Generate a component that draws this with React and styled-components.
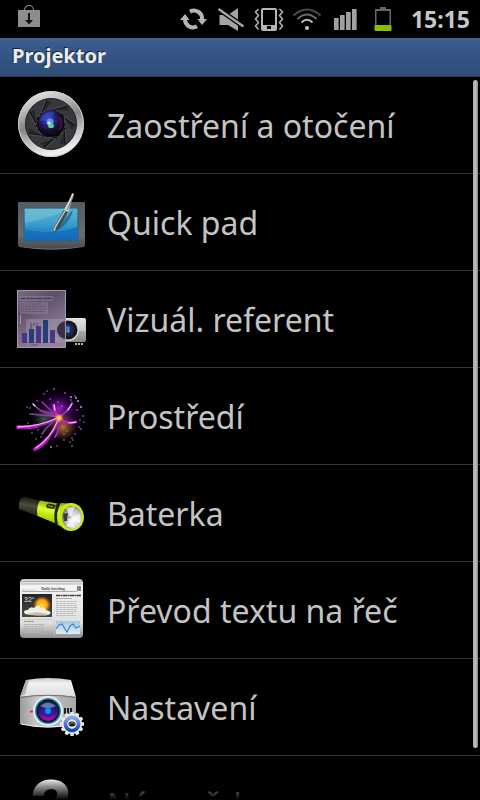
import styled, { createGlobalStyle } from "styled-components";

const GlobalStyle = createGlobalStyle`
  * {
    box-sizing: border-box;
    margin: 0;
    padding: 0;
  }

  body {
    background: #000;
    font-family: "Noto Sans", "Open Sans", sans-serif;
  }
`;

const Screen = styled.div`
  display: flex;
  flex-direction: column;
  height: 100vh;
  overflow: hidden;
  color: #c3c3c3;
`;

const StatusBar = styled.header`
  display: flex;
  align-items: center;
  justify-content: space-between;
  flex: none;
  height: 38px;
  padding: 0 10px 0 18px;
`;

const StatusIcons = styled.div`
  display: flex;
  align-items: center;
  gap: 8px;
`;

const StatusIcon = styled.svg`
  display: block;
  width: ${(props) => props.$width || 30}px;
  height: ${(props) => props.$height || 24}px;
`;

const Clock = styled.time`
  padding-left: 5px;
  font-size: 23px;
  font-weight: 700;
  line-height: 38px;
  color: #c6c6c6;
`;

const TitleBar = styled.div`
  flex: none;
  padding: 0 12px 2px;
  background: linear-gradient(#42638f, #38598a 20%, #2d4c79);
  border-bottom: 1px solid #3a3a3a;
`;

const Title = styled.h1`
  font-size: 20px;
  font-weight: 700;
  line-height: 36px;
  color: #ececec;
  text-shadow: -1px -1px 0 #14233c;
`;

const Main = styled.main`
  position: relative;
  flex: 1;
  min-height: 0;
  overflow: hidden;
`;

const List = styled.ul`
  list-style: none;
`;

const Item = styled.li`
  border-bottom: 1px solid #363636;
`;

const ItemButton = styled.button`
  display: flex;
  align-items: center;
  gap: 20px;
  width: 100%;
  height: 96px;
  padding: 0 15px;
  border: none;
  background: none;
  color: inherit;
  font-family: inherit;
  font-size: 32px;
  line-height: 48px;
  text-align: left;
  white-space: nowrap;
  cursor: pointer;
`;

const ItemLabel = styled.span`
  padding-top: 2px;
`;

const ItemIcon = styled.svg`
  display: block;
  flex: none;
  width: 72px;
  height: 72px;
`;

const Fade = styled.div`
  position: absolute;
  right: 0;
  bottom: 0;
  left: 0;
  height: 22px;
  background: linear-gradient(transparent, #000);
  pointer-events: none;
`;

const ScrollThumb = styled.div`
  position: absolute;
  top: 3px;
  right: 2px;
  width: 5px;
  height: 92.4%;
  border-radius: 3px;
  background: linear-gradient(90deg, #aaa5a5, #c4bfbf 50%, #858181);
`;

function Dots({ points, fill = "#b09fce" }) {
  return points.map(([x, y, r]) => <circle key={`${x}-${y}`} cx={x} cy={y} r={r || 0.7} fill={fill} />);
}

function FocusIcon() {
  const blades = [0, 51, 103, 154, 206, 257, 309];
  return (
    <ItemIcon viewBox="0 0 72 72" aria-hidden="true">
      <defs>
        <linearGradient id="ring" x1="0" y1="0" x2="0.3" y2="1">
          <stop offset="0" stopColor="#f4f4f4" />
          <stop offset="0.3" stopColor="#bcbcbc" />
          <stop offset="0.55" stopColor="#858585" />
          <stop offset="0.8" stopColor="#c4c4c4" />
          <stop offset="1" stopColor="#eee" />
        </linearGradient>
        <radialGradient id="glass" cx="0.4" cy="0.35" r="0.65">
          <stop offset="0" stopColor="#4358c8" />
          <stop offset="0.4" stopColor="#26247c" />
          <stop offset="0.7" stopColor="#1d0d2c" />
          <stop offset="1" stopColor="#08080d" />
        </radialGradient>
      </defs>
      <circle cx="36" cy="35" r="33" fill="url(#ring)" />
      <circle cx="36" cy="35" r="32.5" fill="none" stroke="#cfcfcf" />
      <circle cx="36" cy="35" r="25.5" fill="#36383c" stroke="#1d1d20" />
      {blades.map((angle) => (
        <g key={angle} transform={`rotate(${angle + 10} 36 35)`}>
          <path d="M36 21 L60 32 L58 37 L47 26Z" fill="#26272b" />
          <path d="M34 20 L60 32" fill="none" stroke="#0b0c0e" strokeWidth="1.2" />
          <path d="M36 20 L60 31" fill="none" stroke="#5d6066" strokeWidth="0.6" />
        </g>
      ))}
      <path d="M36 21 L47 25 L50 36 L44 47 L32 48 L23 41 L22 29Z" fill="#08080c" />
      <circle cx="36" cy="34" r="13" fill="url(#glass)" />
      <path d="M25 32 A12 12 0 0 1 40 23 L35 31Z" fill="#344fc4" opacity="0.6" />
      <path d="M44 28 a10 10 0 0 1 0 13" fill="none" stroke="#36193f" strokeWidth="2" />
      <circle cx="35" cy="33" r="3.5" fill="#649ad6" />
      <ellipse cx="36" cy="37" rx="3" ry="2" fill="#56d59b" />
      <circle cx="34" cy="34" r="1.6" fill="#e9d6ff" />
    </ItemIcon>
  );
}

function QuickPadIcon() {
  return (
    <ItemIcon viewBox="0 0 72 72" aria-hidden="true">
      <defs>
        <linearGradient id="padFrame" x1="0" y1="0" x2="0" y2="1">
          <stop offset="0" stopColor="#555b60" />
          <stop offset="0.7" stopColor="#686d71" />
          <stop offset="1" stopColor="#44484c" />
        </linearGradient>
        <linearGradient id="padScreen" x1="0" y1="0" x2="0" y2="1">
          <stop offset="0" stopColor="#56aec9" />
          <stop offset="0.45" stopColor="#2c93c6" />
          <stop offset="0.65" stopColor="#1578bf" />
          <stop offset="1" stopColor="#1466b8" />
        </linearGradient>
      </defs>
      <path d="M3 17 Q3 16 4 16 H69 Q70 16 70 17 V60 Q36 67 3 60Z" fill="url(#padFrame)" />
      <path d="M4 60.5 Q36 66 69 60.5" fill="none" stroke="#74797c" strokeWidth="0.8" />
      <rect x="9" y="22" width="54" height="33" fill="url(#padScreen)" stroke="#2c6384" />
      <path d="M10 23 H51 Q40 31 10 37Z" fill="#8acbd8" opacity="0.4" />
      <path d="M10 43 Q35 50 62 41 V23 H10Z" fill="#7fd0e2" opacity="0.22" />
      <path d="M38 47 L58 23 Q57 34 46 42Z" fill="#0e4e80" opacity="0.55" />
      <path d="M37.5 47.5 L40 40 L49 24 L53 26 L44 42Z" fill="#46494b" />
      <path d="M39 45 L41 40 L50 25" fill="none" stroke="#d4d4d4" strokeWidth="1.3" />
      <path d="M49 24 L56 10 L57 7 L59 8 L58 11 L53 26Z" fill="#d9d5cd" />
      <path d="M52 24 L58 11" stroke="#736f68" strokeWidth="1" />
    </ItemIcon>
  );
}

function PresenterIcon() {
  return (
    <ItemIcon viewBox="0 0 72 72" aria-hidden="true">
      <defs>
        <linearGradient id="beamer" x1="0" y1="0" x2="0" y2="1">
          <stop offset="0" stopColor="#ededed" />
          <stop offset="0.5" stopColor="#adadad" />
          <stop offset="1" stopColor="#868686" />
        </linearGradient>
        <linearGradient id="sheet" x1="0" y1="0" x2="0.5" y2="1">
          <stop offset="0" stopColor="#7d6c85" />
          <stop offset="0.35" stopColor="#5f4e68" />
          <stop offset="0.6" stopColor="#75657f" />
          <stop offset="1" stopColor="#94839c" />
        </linearGradient>
      </defs>
      <rect x="30" y="35" width="41" height="24" rx="2" fill="url(#beamer)" />
      <path d="M51 35 H69 L71 48 H51Z" fill="#ddd" opacity="0.6" />
      <path d="M60 61 h8" stroke="#bbb" strokeWidth="2" strokeDasharray="2 1" />
      <circle cx="53" cy="47" r="11" fill="#d5d5d5" />
      <circle cx="53" cy="47" r="9.5" fill="#18181b" />
      <circle cx="53" cy="47" r="6" fill="#252068" />
      <rect x="2" y="7" width="49" height="58" fill="url(#sheet)" />
      <path d="M51 36 H13 Q11 36 11 38 V59 H51Z" fill="#b9a8c2" opacity="0.35" />
      <path d="M51 36 A11 11 0 0 0 51 58Z" fill="#95859f" />
      <path d="M51 38 A9 9 0 0 0 51 56Z" fill="#3b2e45" />
      <circle cx="53" cy="45" r="2" fill="#3c79d1" />
      <circle cx="53" cy="48" r="1.8" fill="#41b36d" />
      <rect x="2.5" y="7.5" width="48" height="57" fill="none" stroke="#a594ad" />
      <rect x="5" y="13" width="33" height="5" fill="#9787a0" opacity="0.5" />
      <path d="M6 15.5 H37" stroke="#43374d" strokeWidth="1.6" strokeDasharray="4 0.5 1 0.5 2 0.5" />
      <rect x="5" y="19" width="28" height="12" fill="#9787a0" opacity="0.45" />
      <path d="M6 21 H26 M6 23.5 H31 M6 26 H32 M6 28.5 H30" stroke="#655770" strokeDasharray="3 0.6" />
      <path d="M16 40 V46 M19 40 V43 M22 40 V43" stroke="#665872" strokeWidth="1.5" />
      <path d="M5.5 32 V41" stroke="#a08faa" />
      <path d="M7 50 h5 V60 h-5Z M21 43 h5 V60 h-5Z M35 47 h5 V60 h-5Z" fill="#43378b" />
      <path d="M14 46 h5 V60 h-5Z M28 37 h5 V60 h-5Z" fill="#263d76" />
      <path d="M16 62 h7" stroke="#62546c" />
    </ItemIcon>
  );
}

function AmbienceIcon() {
  const sparks = [
    [39, 9, 0.8], [32, 11], [29, 14], [50, 13, 0.8], [56, 17, 1], [60, 16], [61, 18, 1], [63, 21, 1], [56, 20],
    [66, 27, 1], [62, 30], [68, 36, 0.8], [65, 40], [69, 42], [66, 49, 0.8], [64, 47], [57, 58], [55, 62],
    [58, 60], [57, 66, 0.8], [49, 60], [42, 66], [36, 67, 0.9], [27, 63], [21, 59], [17, 53], [13, 43],
    [15, 28], [12, 27], [22, 21], [35, 19], [43, 22], [47, 26], [52, 51], [49, 54], [26, 57], [23, 50], [60, 54],
  ];
  return (
    <ItemIcon viewBox="0 0 72 72" aria-hidden="true">
      <defs>
        <radialGradient id="aura">
          <stop offset="0" stopColor="#a020c0" stopOpacity="0.95" />
          <stop offset="0.45" stopColor="#5c0b88" stopOpacity="0.65" />
          <stop offset="1" stopColor="#20003c" stopOpacity="0" />
        </radialGradient>
        <radialGradient id="amber">
          <stop offset="0" stopColor="#d99524" stopOpacity="0.8" />
          <stop offset="1" stopColor="#69500c" stopOpacity="0" />
        </radialGradient>
        <radialGradient id="moss">
          <stop offset="0" stopColor="#46634a" stopOpacity="0.8" />
          <stop offset="1" stopColor="#203a20" stopOpacity="0" />
        </radialGradient>
        <radialGradient id="core">
          <stop offset="0" stopColor="#fff2a2" />
          <stop offset="0.4" stopColor="#ffb02e" />
          <stop offset="1" stopColor="#ee6a3a" stopOpacity="0" />
        </radialGradient>
      </defs>
      <circle cx="43" cy="35" r="31" fill="url(#aura)" opacity="0.65" />
      <circle cx="44" cy="29" r="15" fill="url(#aura)" />
      <circle cx="48" cy="47" r="14" fill="url(#amber)" />
      <circle cx="29" cy="39" r="12" fill="url(#moss)" />
      <Dots points={sparks} />
      <g fill="none" strokeLinecap="round">
        <g stroke="#8c4298" strokeWidth="1.5">
          <path d="M43 37 Q29 35 15 34" />
          <path d="M43 37 Q27 34 18 24" />
          <path d="M43 37 Q34 29 27 22" />
          <path d="M43 38 Q32 46 27 54" />
          <path d="M43 37 Q34 31 26 31" />
        </g>
        <path d="M44 38 Q26 47 12 47" stroke="#8f2d96" strokeWidth="2.5" />
        <path d="M22 46 Q12 48 3 47" stroke="#b314c4" strokeWidth="4" />
        <path d="M43 39 Q39 54 28 63" stroke="#8f2d96" strokeWidth="2.5" />
        <path d="M33 58 Q28 65 20 69" stroke="#b314c4" strokeWidth="4" />
        <path d="M43 37 Q38 29 39 25" stroke="#b021cf" strokeWidth="3" />
        <path d="M44 38 Q52 45 61 42" stroke="#b021cf" strokeWidth="2.5" />
        <path d="M44 37 Q52 33 57 23" stroke="#94319f" strokeWidth="2" />
        <path d="M44 39 Q45 51 40 57" stroke="#a426b8" strokeWidth="2" />
        <path d="M42 38 Q26 46 3 47" stroke="#f7b5ef" strokeWidth="1.3" />
        <path d="M43 40 Q36 58 21 68" stroke="#f3a8eb" strokeWidth="1.3" />
        <path d="M40 30 L39 25 M54 43 L61 42 M53 30 L57 24 M20 26 L18 24" stroke="#ffc9ff" strokeWidth="1.2" />
      </g>
      <circle cx="44" cy="38" r="5" fill="url(#core)" />
    </ItemIcon>
  );
}

function TorchIcon() {
  return (
    <ItemIcon viewBox="0 0 72 72" aria-hidden="true">
      <defs>
        <linearGradient id="grip" x1="0.3" y1="0" x2="0.1" y2="1">
          <stop offset="0" stopColor="#15180c" />
          <stop offset="0.4" stopColor="#4a4d3c" />
          <stop offset="1" stopColor="#15180c" />
        </linearGradient>
        <linearGradient id="lime" x1="0.3" y1="0" x2="0.1" y2="1">
          <stop offset="0" stopColor="#8dac00" />
          <stop offset="0.35" stopColor="#dcff2c" />
          <stop offset="0.75" stopColor="#a8cf00" />
          <stop offset="1" stopColor="#5e7800" />
        </linearGradient>
        <radialGradient id="bulb" cx="0.6" cy="0.6" r="0.7">
          <stop offset="0" stopColor="#fff" />
          <stop offset="0.55" stopColor="#c8c8c8" />
          <stop offset="1" stopColor="#54564a" />
        </radialGradient>
      </defs>
      <path d="M9 19.5 Q3 22 4 32 L22 39 L25 23.5Z" fill="url(#grip)" />
      <path d="M25 23.5 Q21 29 22.5 39 L42 47 L46 27Z" fill="url(#lime)" />
      <path d="M31 28 L34 26.5 L41 28 L39 32 L32 31Z" fill="#282e10" />
      <path d="M33 28.5 L38 30" stroke="#a0b443" />
      <path d="M42 26 L47 26 L45 50 L40 47 Q38 35 42 26Z" fill="#1d220b" />
      <path d="M46 26 Q40 36 43 48 L56 54 L61 27Z" fill="url(#lime)" />
      <ellipse cx="56" cy="40" rx="13" ry="14" fill="#c4ed12" />
      <ellipse cx="57" cy="40.5" rx="10" ry="11.5" fill="url(#bulb)" />
      <path d="M56 40 L51 31 L60 29Z M56 41 L65 37 V46Z M56 42 L60 51 L51 49Z" fill="#fff" opacity="0.6" />
      <path d="M48 37 L53 36 L52 44 L49 44Z" fill="#373a35" />
      <path d="M52 39 L57 40 L52 42Z" fill="#999" />
    </ItemIcon>
  );
}

function BriefingIcon() {
  return (
    <ItemIcon viewBox="0 0 72 72" aria-hidden="true">
      <defs>
        <linearGradient id="paper" x1="0" y1="0" x2="0" y2="1">
          <stop offset="0" stopColor="#c4c4c4" />
          <stop offset="0.1" stopColor="#f5f5f5" />
          <stop offset="0.75" stopColor="#dedede" />
          <stop offset="1" stopColor="#8f8f8f" />
        </linearGradient>
        <linearGradient id="night" x1="0" y1="0" x2="0" y2="1">
          <stop offset="0" stopColor="#252525" />
          <stop offset="1" stopColor="#474747" />
        </linearGradient>
        <radialGradient id="sun">
          <stop offset="0" stopColor="#ffe55f" />
          <stop offset="0.6" stopColor="#ff9e00" />
          <stop offset="1" stopColor="#d86700" stopOpacity="0" />
        </radialGradient>
        <linearGradient id="sky" x1="0" y1="0" x2="0" y2="1">
          <stop offset="0" stopColor="#a0c9df" />
          <stop offset="1" stopColor="#e2eaee" />
        </linearGradient>
      </defs>
      <rect x="5" y="5" width="63" height="59" rx="4" fill="url(#paper)" />
      <path d="M6 7.5 H67 M5 10 H68" stroke="#a5a5a5" strokeWidth="0.8" />
      <text x="38" y="16" textAnchor="middle" fontFamily="Liberation Serif, serif" fontSize="4" fontWeight="700" fill="#4a4a4a">
        Daily briefing
      </text>
      <rect x="62" y="12" width="4" height="5" fill="#8b8580" />
      <path d="M7 17.5 H62" stroke="#999" strokeWidth="0.8" />
      <path d="M7 16 H20" stroke="#bbb" strokeDasharray="2 1" strokeWidth="0.8" />
      <rect x="7" y="20" width="30" height="23" fill="url(#night)" />
      <circle cx="27" cy="31" r="9" fill="url(#sun)" />
      <path d="M10 40 Q7 36 13 36 Q15 32 19 34 Q23 29 26 34 Q30 32 31 36 Q37 37 35 40 Q30 43 10 40Z" fill="#f1eee4" />
      <path d="M12 40 Q20 37 33 40 Q30 42 12 40Z" fill="#c9b99d" />
      <text x="9" y="28" fontFamily="Roboto, sans-serif" fontSize="7" fill="#e5e5e5">
        32°
      </text>
      <path d="M41 21.5 H66" stroke="#3c3c3c" strokeWidth="1.4" strokeDasharray="4 0.5 2 0.5" />
      <path d="M41 24.5 H57" stroke="#8a8a8a" strokeWidth="0.8" strokeDasharray="2 0.5" />
      <path
        d="M41 27.5 H62 M41 29.5 H61 M41 31.5 H62 M41 33.5 H62 M41 35.5 H61 M41 37.5 H62 M41 39.5 H59 M41 41.5 H61"
        stroke="#bdbdbd"
        strokeDasharray="3 0.6"
      />
      <path d="M9 47.5 H19" stroke="#888" strokeDasharray="2 0.5" />
      <path d="M9 50.5 H29 M9 52.5 H28 M9 54.5 H29 M9 56.5 H29 M9 58.5 H27" stroke="#b2b2b2" strokeDasharray="3 0.6" />
      <path d="M7 45.5 H38 M39.5 46 V62" stroke="#c8c8c8" strokeWidth="0.7" />
      <rect x="41" y="47" width="24" height="13" fill="url(#sky)" />
      <path d="M41 55 L44 51 L47 50 L50 55 L52 58 L55 52 L58 50 L61 54 L65 52" fill="none" stroke="#3b83cc" strokeWidth="1.2" />
    </ItemIcon>
  );
}

function SettingsIcon() {
  const teeth = Array.from({ length: 12 }, (_, i) => i * 30);
  return (
    <ItemIcon viewBox="0 4 72 72" aria-hidden="true">
      <defs>
        <linearGradient id="lid" x1="0" y1="0" x2="0" y2="1">
          <stop offset="0" stopColor="#c8c8c8" />
          <stop offset="0.3" stopColor="#f1f1f1" />
          <stop offset="1" stopColor="#dcdcdc" />
        </linearGradient>
        <linearGradient id="case" x1="0" y1="0" x2="1" y2="0">
          <stop offset="0" stopColor="#9b9b9b" />
          <stop offset="0.3" stopColor="#c8c8c8" />
          <stop offset="1" stopColor="#a8a8a8" />
        </linearGradient>
        <linearGradient id="violet" x1="0" y1="0" x2="0" y2="1">
          <stop offset="0" stopColor="#122042" />
          <stop offset="0.5" stopColor="#35117c" />
          <stop offset="1" stopColor="#c500b7" />
        </linearGradient>
        <linearGradient id="cog" x1="0" y1="0" x2="0" y2="1">
          <stop offset="0" stopColor="#87a8e7" />
          <stop offset="1" stopColor="#1747b0" />
        </linearGradient>
      </defs>
      <path d="M5 30 Q33 25 61 30 V57 Q33 64 5 57Z" fill="url(#case)" />
      <path d="M11 13 Q33 9 56 13 L61 30 Q33 26 5 30Z" fill="url(#lid)" />
      <path d="M14 13 L10 27 L5 30 L11 13Z" fill="#b0b0b0" />
      <path d="M5 30.5 Q33 26 61 30.5" fill="none" stroke="#707070" />
      <path d="M6 57 Q33 63 60 57" fill="none" stroke="#eee" />
      <path d="M15 44.5 H19" stroke="#d324af" strokeWidth="2" />
      <path d="M50 41 V47 M53 41 V47 M56 41 V47" stroke="#222" strokeWidth="2" />
      <circle cx="33" cy="44" r="15" fill="#ececec" />
      <circle cx="33" cy="44" r="13" fill="#128fb7" />
      <circle cx="33" cy="44" r="11.5" fill="#101324" />
      <circle cx="33" cy="44" r="10" fill="url(#violet)" />
      <circle cx="33" cy="44" r="6" fill="#1929a6" />
      <circle cx="33" cy="44" r="3" fill="#178ae5" />
      <path d="M25 39 Q33 32 41 39 Q33 43 25 39Z" fill="#b4cfe1" opacity="0.5" />
      {teeth.map((angle) => (
        <path key={angle} d="M54.5 49 L55.5 45 H58.5 L59.5 49Z" fill="#e6e6e6" transform={`rotate(${angle} 57 57)`} />
      ))}
      <circle cx="57" cy="57" r="10" fill="#ededed" />
      <circle cx="57" cy="57" r="6.5" fill="none" stroke="url(#cog)" strokeWidth="4" />
      <circle cx="57" cy="57" r="4.5" fill="#e5e5e5" />
      <ellipse cx="57" cy="57" rx="3.5" ry="2.5" fill="#171717" />
      <path d="M54 58 Q57 54 60 57" fill="none" stroke="#999" />
    </ItemIcon>
  );
}

function HelpIcon() {
  return (
    <ItemIcon viewBox="0 0 72 72" aria-hidden="true">
      <defs>
        <linearGradient id="help" gradientUnits="userSpaceOnUse" x1="0" y1="10" x2="0" y2="60">
          <stop offset="0" stopColor="#fff" />
          <stop offset="1" stopColor="#8b8b8b" />
        </linearGradient>
      </defs>
      <text
        x="36"
        y="59"
        textAnchor="middle"
        fontFamily="Liberation Sans, sans-serif"
        fontSize="66"
        fontWeight="700"
        fill="url(#help)"
        stroke="url(#help)"
        strokeWidth="2"
      >
        ?
      </text>
    </ItemIcon>
  );
}

function DownloadIcon() {
  return (
    <StatusIcon $width={22} $height={28} viewBox="0 0 22 28" aria-hidden="true">
      <path d="M6.5 6 V5 a4.5 4.5 0 0 1 9 0 V6" fill="none" stroke="#888" strokeWidth="1.2" />
      <rect y="5" width="22" height="17" fill="#8d8d8d" />
      <path d="M10 8 h2 V15 h3 L11 19.5 L7 15 h3Z" fill="#111" />
    </StatusIcon>
  );
}

function SyncIcon() {
  return (
    <StatusIcon viewBox="0 0 30 24" aria-hidden="true">
      <g fill="none" stroke="#b5b5b5" strokeWidth="4">
        <path d="M12 4.7 A8 8 0 0 1 24 12" />
        <path d="M7 12 A8 8 0 0 0 19 19.3" />
      </g>
      <path d="M2 13 H11.5 L7 7Z M19.5 12 H29 L24 18Z" fill="#b5b5b5" />
    </StatusIcon>
  );
}

function MuteIcon() {
  return (
    <StatusIcon viewBox="0 0 30 24" aria-hidden="true">
      <path d="M3.5 8 H12 L22 1 V24 L12 18 H3.5Z" fill="#a5a5a5" />
      <path d="M2.5 2 L27.5 19.5" stroke="#000" strokeWidth="5" />
      <path d="M2.5 2 L27.5 19.5" stroke="#a5a5a5" strokeWidth="2.4" />
    </StatusIcon>
  );
}

function VibrateIcon() {
  return (
    <StatusIcon viewBox="0 0 30 24" aria-hidden="true">
      <rect x="8" y="2" width="14" height="21" rx="1" fill="none" stroke="#b5b5b5" strokeWidth="2" />
      <path d="M8 18 H22 V23 H8Z" fill="#b5b5b5" />
      <rect x="13" y="19" width="4" height="3" fill="#000" />
      <g fill="none" stroke="#b5b5b5" strokeWidth="1.5">
        <path d="M4.5 2 L1.5 5 L4.5 8.5 L1.5 12 L4.5 15.5 L1.5 19 L4.5 22.5" />
        <path d="M25.5 2 L28.5 5 L25.5 8.5 L28.5 12 L25.5 15.5 L28.5 19 L25.5 22.5" />
      </g>
    </StatusIcon>
  );
}

function WifiIcon() {
  return (
    <StatusIcon viewBox="0 0 30 24" aria-hidden="true">
      <g fill="none" strokeWidth="2">
        <path d="M1.5 8.5 Q15 -3.5 28.5 8.5" stroke="#4c4c4c" />
        <path d="M5.5 12 Q15 3 24.5 12" stroke="#6e6e6e" />
        <path d="M9.5 15.5 Q15 10 20.5 15.5" stroke="#bbb" />
      </g>
      <circle cx="15" cy="21" r="2" fill="#c4c4c4" />
    </StatusIcon>
  );
}

function SignalIcon() {
  return (
    <StatusIcon viewBox="0 0 30 24" aria-hidden="true">
      <path d="M4 11 h5 V23 h-5Z M10 8 h5 V23 h-5Z M16 5 h5 V23 h-5Z M22 2 h5 V23 h-5Z" fill="#a0a0a0" />
      <path d="M8.5 11 V23 M14.5 8 V23 M20.5 5 V23 M26.5 2 V23" stroke="#6a6a6a" />
    </StatusIcon>
  );
}

function BatteryIcon() {
  return (
    <StatusIcon viewBox="0 0 30 24" aria-hidden="true">
      <path d="M12 0 h6 V2 h5 V23 H7 V2 h5Z" fill="#686868" />
      <path d="M8.5 4 H21.5 V18 H8.5Z" fill="#000" />
      <rect x="6.5" y="18" width="17" height="6" rx="1" fill="#8ebd00" />
    </StatusIcon>
  );
}

const items = [
  { label: "Zaostření a otočení", Icon: FocusIcon },
  { label: "Quick pad", Icon: QuickPadIcon },
  { label: "Vizuál. referent", Icon: PresenterIcon },
  { label: "Prostředí", Icon: AmbienceIcon },
  { label: "Baterka", Icon: TorchIcon },
  { label: "Převod textu na řeč", Icon: BriefingIcon },
  { label: "Nastavení", Icon: SettingsIcon },
  { label: "Nápověda", Icon: HelpIcon },
];

function App() {
  return (
    <>
      <GlobalStyle />
      <Screen>
        <StatusBar>
          <DownloadIcon />
          <StatusIcons>
            <SyncIcon />
            <MuteIcon />
            <VibrateIcon />
            <WifiIcon />
            <SignalIcon />
            <BatteryIcon />
            <Clock>15:15</Clock>
          </StatusIcons>
        </StatusBar>
        <TitleBar>
          <Title>Projektor</Title>
        </TitleBar>
        <Main>
          <List>
            {items.map(({ label, Icon }) => (
              <Item key={label}>
                <ItemButton type="button">
                  <Icon />
                  <ItemLabel>{label}</ItemLabel>
                </ItemButton>
              </Item>
            ))}
          </List>
          <Fade />
          <ScrollThumb />
        </Main>
      </Screen>
    </>
  );
}

export default App;
